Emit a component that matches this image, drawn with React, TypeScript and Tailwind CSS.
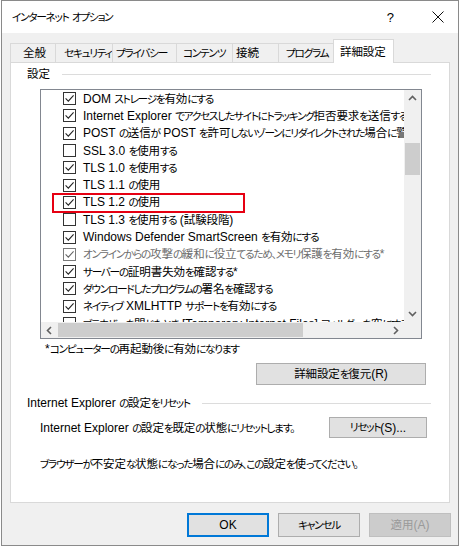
import React from 'react';

// Kana runs are set smaller and tighter than kanji, like Yu Gothic UI in the shot
function J({ t }: { t: string }) {
  const parts = t.match(/[\u3000-\u30ff]+|[\u3400-\u9fff\uff00-\uffef]+|[^\u3000-\u30ff\u3400-\u9fff\uff00-\uffef]+/g) || [];
  return (
    <>
      {parts.map((p, i) => {
        if (/^[\u3000-\u30ff]/.test(p))
          return (
            <span
              key={i}
              className="font-['Noto_Sans_CJK_JP',sans-serif] text-[10.7px] tracking-[-1.3px] [font-feature-settings:'palt']"
            >
              {p}
            </span>
          );
        if (/^[\u3400-\u9fff\uff00-\uffef]/.test(p))
          return (
            <span key={i} className="font-['Noto_Sans_CJK_JP',sans-serif] text-[11.5px] tracking-[-0.1px]">
              {p}
            </span>
          );
        return <span key={i}>{p}</span>;
      })}
    </>
  );
}

function Check({ on, dim }: { on: boolean; dim?: boolean }) {
  return (
    <span
      className={`w-[13px] h-[13px] shrink-0 border bg-white flex items-center justify-center ${
        dim ? 'border-[#7a7a7a]' : 'border-[#333333]'
      }`}
    >
      {on && (
        <svg width="11" height="11" viewBox="0 0 11 11">
          <path d="M1.6 5.4 L4.3 8.1 L9.6 2.4" fill="none" stroke={dim ? '#666' : '#222'} strokeWidth="1.1" />
        </svg>
      )}
    </span>
  );
}

function Chevron({ dir }: { dir: 'up' | 'down' | 'left' | 'right' }) {
  const d = {
    up: 'M1 6 L4.5 2.5 L8 6',
    down: 'M1 3 L4.5 6.5 L8 3',
    left: 'M6 1 L2.5 4.5 L6 8',
    right: 'M3 1 L6.5 4.5 L3 8',
  }[dir];
  return (
    <svg width="9" height="9" viewBox="0 0 9 9">
      <path d={d} fill="none" stroke="#606060" strokeWidth="1.6" />
    </svg>
  );
}

const rows = [
  { on: true, t: 'DOM ストレージを有効にする' },
  { on: true, t: 'Internet Explorer でアクセスしたサイトにトラッキング拒否要求を送信する' },
  { on: true, t: 'POST の送信が POST を許可しないゾーンにリダイレクトされた場合に警告する' },
  { on: false, t: 'SSL 3.0 を使用する' },
  { on: true, t: 'TLS 1.0 を使用する' },
  { on: true, t: 'TLS 1.1 の使用' },
  { on: true, t: 'TLS 1.2 の使用', mark: true },
  { on: false, t: 'TLS 1.3 を使用する (試験段階)' },
  { on: true, t: 'Windows Defender SmartScreen を有効にする' },
  { on: true, t: 'オンラインからの攻撃の緩和に役立てるため、メモリ保護を有効にする*', dim: true },
  { on: true, t: 'サーバーの証明書失効を確認する*' },
  { on: true, t: 'ダウンロードしたプログラムの署名を確認する' },
  { on: true, t: 'ネイティブ XMLHTTP サポートを有効にする' },
  { on: false, t: 'ブラウザーを閉じたとき、[Temporary Internet Files] フォルダーを空にする' },
];

const tabs = [
  { t: '全般', w: 'w-[45px]', pl: 'pl-[12px]' },
  { t: 'セキュリティ', w: 'w-[57px]', pl: 'pl-[8px]' },
  { t: 'プライバシー', w: 'w-[64px]', pl: 'pl-[3px]' },
  { t: 'コンテンツ', w: 'w-[56px]', pl: 'pl-[6px]' },
  { t: '接続', w: 'w-[46px]', pl: 'pl-[3px]' },
  { t: 'プログラム', w: 'w-[55px]', pl: 'pl-[7px]' },
];

export default function App() {
  return (
    <div className="w-[462px] h-[550px] bg-white text-[12px] text-black font-['Liberation_Sans','Noto_Sans_CJK_JP',sans-serif]">
      <div className="ml-[1px] w-[458px] h-[546px] border border-[#8a8a8a] bg-[#f0f0f0] flex flex-col">
        {/* title bar */}
        <div className="h-[32px] bg-white flex items-center pl-[10px] shrink-0">
          <span className="leading-none whitespace-nowrap">
            <J t="インターネット オプション" />
          </span>
          <span className="ml-auto mr-[38px] text-[13px] leading-none">?</span>
          <svg width="12" height="12" viewBox="0 0 12 12" className="mr-[14px]">
            <path d="M0.5 0.5 L11.5 11.5 M11.5 0.5 L0.5 11.5" stroke="#111" strokeWidth="1" />
          </svg>
        </div>

        <div className="flex-1 px-[8px] flex flex-col">
          {/* tabs */}
          <div className="mt-[6px] h-[23px] flex items-end">
            {tabs.map((tab) => (
              <div
                key={tab.t}
                className={`${tab.w} ${tab.pl} h-[19px] border-t border-l border-[#d9d9d9] flex items-center whitespace-nowrap leading-none`}
              >
                <J t={tab.t} />
              </div>
            ))}
            <div className="relative z-10 -mb-px w-[61px] h-[24px] bg-white border border-b-0 border-[#d9d9d9] pl-[6px] flex items-center whitespace-nowrap leading-none">
              <J t="詳細設定" />
            </div>
          </div>

          {/* panel */}
          <div className="w-[440px] h-[441px] bg-white border border-[#d9d9d9] flex flex-col">
            <div className="mt-[4px] h-[14px] pl-[16px] pr-[18px] flex items-center">
              <span className="leading-none">
                <J t="設定" />
              </span>
              <div className="flex-1 h-px bg-[#dcdcdc] ml-[12px]" />
            </div>

            {/* list box */}
            <div className="mt-[8px] ml-[29px] w-[382px] h-[250px] border border-[#828790] flex flex-col">
              <div className="flex flex-1 min-h-0">
                <div className="flex-1 overflow-hidden">
                  {rows.map((r, i) => (
                    <div key={i} className="relative h-[17.3px] flex items-center whitespace-nowrap pl-[22px]">
                      <Check on={r.on} dim={r.dim} />
                      <span className={`ml-[7px] leading-none ${r.dim ? 'text-[#6d6d6d]' : ''}`}>
                        <J t={r.t} />
                      </span>
                      {r.mark && (
                        <div className="absolute left-[11px] top-[-1px] w-[193px] h-[20px] border-2 border-[#e60012]" />
                      )}
                    </div>
                  ))}
                </div>
                <div className="w-[17px] bg-[#f0f0f0] flex flex-col items-center">
                  <div className="h-[17px] flex items-center justify-center">
                    <Chevron dir="up" />
                  </div>
                  <div className="mt-[36px] w-[15px] h-[32px] bg-[#cdcdcd]" />
                  <div className="mt-auto h-[17px] flex items-center justify-center">
                    <Chevron dir="down" />
                  </div>
                </div>
              </div>
              <div className="h-[16px] flex bg-[#f0f0f0]">
                <div className="w-[17px] flex items-center justify-center">
                  <Chevron dir="left" />
                </div>
                <div className="w-[245px] my-[1px] bg-[#cdcdcd]" />
                <div className="ml-auto w-[17px] flex items-center justify-center">
                  <Chevron dir="right" />
                </div>
                <div className="w-[17px] bg-[#f0f0f0]" />
              </div>
            </div>

            <div className="mt-[2px] pl-[34px] h-[16px] flex items-center leading-none whitespace-nowrap">
              <J t="*コンピューターの再起動後に有効になります" />
            </div>

            <button className="mt-[6px] ml-[245px] w-[170px] h-[22px] bg-[#e1e1e1] border border-[#adadad] flex items-center justify-center leading-none">
              <J t="詳細設定を復元(R)" />
            </button>

            <div className="mt-[11px] h-[14px] pl-[16px] pr-[18px] flex items-center">
              <span className="leading-none whitespace-nowrap">
                <J t="Internet Explorer の設定をリセット" />
              </span>
              <div className="flex-1 h-px bg-[#dcdcdc] ml-[12px]" />
            </div>

            <div className="mt-[7px] h-[21px] pl-[29px] pr-[22px] flex items-center">
              <span className="leading-none whitespace-nowrap">
                <J t="Internet Explorer の設定を既定の状態にリセットします。" />
              </span>
              <button className="ml-auto w-[98px] h-[21px] bg-[#e1e1e1] border border-[#adadad] flex items-center justify-center leading-none">
                <J t="リセット(S)..." />
              </button>
            </div>

            <div className="mt-[18px] h-[16px] pl-[29px] flex items-center leading-none whitespace-nowrap">
              <J t="ブラウザーが不安定な状態になった場合にのみ、この設定を使ってください。" />
            </div>
          </div>

          {/* dialog buttons */}
          <div className="mt-[10px] flex justify-end gap-[9px] -mr-[1px]">
            <button className="w-[82px] h-[24px] bg-[#e1e1e1] border border-[#0078d7] shadow-[inset_0_0_0_1px_#0078d7] flex items-center justify-center leading-none">
              OK
            </button>
            <button className="w-[82px] h-[24px] bg-[#e1e1e1] border border-[#adadad] flex items-center justify-center leading-none">
              <J t="キャンセル" />
            </button>
            <button className="w-[82px] h-[24px] bg-[#cccccc] border border-[#bfbfbf] text-[#9a9a9a] flex items-center justify-center leading-none">
              <J t="適用(A)" />
            </button>
          </div>
        </div>
      </div>
    </div>
  );
}
